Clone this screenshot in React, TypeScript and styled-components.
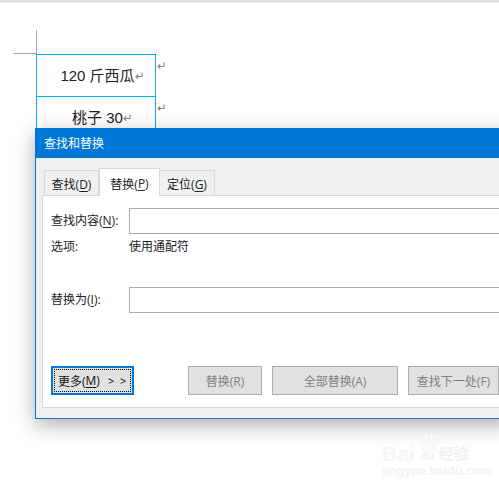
import React from "react";
import styled, { createGlobalStyle } from "styled-components";

const Global = createGlobalStyle`
  html, body { margin: 0; padding: 0; background: #fff; }
  body { font-family: "Open Sans", "Noto Sans CJK SC", sans-serif; }
`;
const Page = styled.div`
  position: relative; width: 499px; height: 487px; overflow: hidden; background: #fff;
`;
const TopRule = styled.div`
  height: 2px; background: #dcdcdc; border-bottom: 1px solid #eee;
`;
const Sheet = styled.div`
  display: grid; grid-template-columns: 23px 119px auto; grid-template-rows: 24px auto;
  margin: 27px 0 0 13px;
`;
const CornerV = styled.div`
  grid-column: 1; grid-row: 1; margin-right: -1px;
  border-right: 1px solid #aaa; border-bottom: 1px solid #aaa;
`;
const Table = styled.div`
  grid-column: 2; grid-row: 2; display: flex; flex-direction: column;
  border: 1px solid #00b0f0; border-bottom: none; width: 120px; box-sizing: border-box;
`;
const Cell = styled.div<{ $last?: boolean }>`
  height: 41px; display: flex; align-items: center; justify-content: center; padding-left: 11px;
  box-sizing: content-box;
  font: 15px "Liberation Sans", "Noto Sans CJK SC", sans-serif; line-height: 40px; color: #222;
  border-bottom: ${p => (p.$last ? "none" : "1px solid #00b0f0")};
  white-space: pre;
`;
const Marks = styled.div`
  grid-column: 3; grid-row: 2; display: flex; flex-direction: column; gap: 34px; padding: 8px 0 0 2px;
`;
const Ret = styled.svg`
  width: 8px; height: 8px; flex: none; display: block;
`;
const Mark = () => (
  <Ret viewBox="0 0 8 8">
    <path d="M7 .5V4.5H1.2M3.2 2.5L1 4.5L3.2 6.6" fill="none" stroke="#888" strokeWidth="1.1" />
  </Ret>
);
const Dialog = styled.div`
  position: absolute; left: 35px; top: 128px; width: 480px; height: 291px; box-sizing: border-box;
  background: #f0f0f0; border: 1px solid #0078d7; border-top: none;
  box-shadow: 0 6px 20px rgba(0,0,0,.32);
  display: flex; flex-direction: column;
`;
const TitleBar = styled.div`
  height: 30px; flex: none; background: #0078d7; color: #fff; display: flex; align-items: center;
  padding-left: 9px; font-size: 12px; margin-left: -1px;
`;
const Body = styled.div`
  padding: 10px 0 0 6px; display: flex; flex-direction: column; flex: 1;
`;
const Tabs = styled.div`
  display: flex; height: 28px; align-items: flex-end; position: relative; z-index: 1;
  margin: 0 0 -1px 2px;
`;
const Tab = styled.div<{ $active?: boolean; $w: number }>`
  width: ${p => p.$w}px; box-sizing: border-box;
  height: ${p => (p.$active ? 28 : 26)}px;
  padding-top: 2px;
  background: ${p => (p.$active ? "#fff" : "#f0f0f0")};
  border: 1px solid #d9d9d9;
  border-bottom: ${p => (p.$active ? "none" : "1px solid #d9d9d9")};
  border-left: ${p => (p.$active ? "1px solid #d9d9d9" : "none")};
  display: flex; align-items: center; justify-content: center;
  font-size: 12px; color: #222; white-space: pre;
  &:first-child { border-left: 1px solid #d9d9d9; }
`;
const U = styled.span`
  text-decoration: underline; text-underline-offset: 2px;
`;
const Panel = styled.div`
  width: 470px; height: 213px; box-sizing: border-box; background: #fff;
  border: 1px solid #d9d9d9; padding: 12px 0 0 8px; display: flex; flex-direction: column;
`;
const FieldRow = styled.div<{ $mt?: number }>`
  display: flex; align-items: center; margin-top: ${p => p.$mt ?? 0}px;
  font-size: 12px; line-height: 16px; color: #222;
`;
const Label = styled.div`
  width: 78px; flex: none; white-space: pre;
`;
const Input = styled.div`
  width: 380px; height: 26px; box-sizing: border-box; border: 1px solid #adadad; background: #fff;
`;
const Buttons = styled.div`
  display: flex; margin-top: 53px; gap: 10px;
`;
const Btn = styled.div<{ $w: number; $gap?: number }>`
  width: ${p => p.$w}px; height: 29px; box-sizing: border-box; flex: none;
  margin-left: ${p => p.$gap ?? 0}px;
  background: #e1e1e1; border: 1px solid #adadad; color: #7f7f7f;
  display: flex; align-items: center; justify-content: center; font-size: 12px; white-space: pre;
`;
const DefaultBtn = styled.div`
  width: 83px; height: 29px; box-sizing: border-box; flex: none;
  background: #e1e1e1; border: 2px solid #0078d7; padding: 1px;
  display: flex;
`;
const FocusRing = styled.div`
  flex: 1; border: 1px dotted #000; display: flex; align-items: center; padding-left: 3px;
  font-size: 12px; color: #111; white-space: pre;
`;
const Chevrons = styled.span`
  margin-left: 8px; font-size: 11px; letter-spacing: 1.5px; color: #000;
`;
const Watermark = styled.div`
  position: absolute; left: 382px; top: 433px; width: 112px; height: 46px;
  font-family: "Liberation Sans", "Noto Sans CJK SC", sans-serif;
`;
const Paw = styled.svg`
  position: absolute; left: 35px; top: 0; width: 22px; height: 20px;
`;
const Logo = styled.div`
  position: absolute; left: 0; top: 12px; display: flex; align-items: center; height: 18px;
  font-weight: 700; font-size: 21px; line-height: 18px; color: #f6f6f6; white-space: pre;
`;
const LogoDu = styled.span`
  font-size: 11px; margin: 3px 3px 0 6px; width: 15px; color: #eeeeee;
`;
const LogoCn = styled.span`
  font-size: 15px; color: #f0f0f0;
`;
const Domain = styled.div`
  position: absolute; left: 0; top: 32px; font-size: 12.5px; line-height: 12px; font-weight: 700;
  color: #f3f3f3; white-space: nowrap;
`;

export default function App() {
  return (
    <Page>
      <Global />
      <TopRule />
      <Sheet>
        <CornerV />
        <Table>
          <Cell>120 斤西瓜<Mark /></Cell>
          <Cell $last>桃子 30<Mark /></Cell>
        </Table>
        <Marks>
          <Mark />
          <Mark />
        </Marks>
      </Sheet>
      <Dialog>
        <TitleBar>查找和替换</TitleBar>
        <Body>
          <Tabs>
            <Tab $w={55}>查找(<U>D</U>)</Tab>
            <Tab $w={61} $active>替换(<U>P</U>)</Tab>
            <Tab $w={55}>定位(<U>G</U>)</Tab>
          </Tabs>
          <Panel>
            <FieldRow>
              <Label>查找内容(<U>N</U>):</Label>
              <Input />
            </FieldRow>
            <FieldRow $mt={5}>
              <Label>选项:</Label>
              <span>使用通配符</span>
            </FieldRow>
            <FieldRow $mt={32}>
              <Label>替换为(<U>I</U>):</Label>
              <Input />
            </FieldRow>
            <Buttons>
              <DefaultBtn>
                <FocusRing>更多(<U>M</U>)<Chevrons>&gt; &gt;</Chevrons></FocusRing>
              </DefaultBtn>
              <Btn $w={74} $gap={44}>替换(R)</Btn>
              <Btn $w={126}>全部替换(A)</Btn>
              <Btn $w={91}>查找下一处(F)</Btn>
            </Buttons>
          </Panel>
        </Body>
      </Dialog>
      <Watermark>
        <Paw viewBox="0 0 32 30">
          <g fill="#fbfbfb" stroke="#efefef" strokeWidth="1.2">
            <ellipse cx="6" cy="13" rx="3.5" ry="4.5" />
            <ellipse cx="13" cy="6" rx="3.5" ry="5" />
            <ellipse cx="21" cy="6" rx="3.5" ry="5" />
            <ellipse cx="28" cy="13" rx="3.5" ry="4.5" />
            <path d="M17 14c4 0 9 7 9 11s-5 4-9 3c-4 1-10 1-10-3s6-11 10-11z" />
          </g>
        </Paw>
        <Logo>Bai<LogoDu>du</LogoDu><LogoCn>经验</LogoCn></Logo>
        <Domain>jingyan.baidu.com</Domain>
      </Watermark>
    </Page>
  );
}
